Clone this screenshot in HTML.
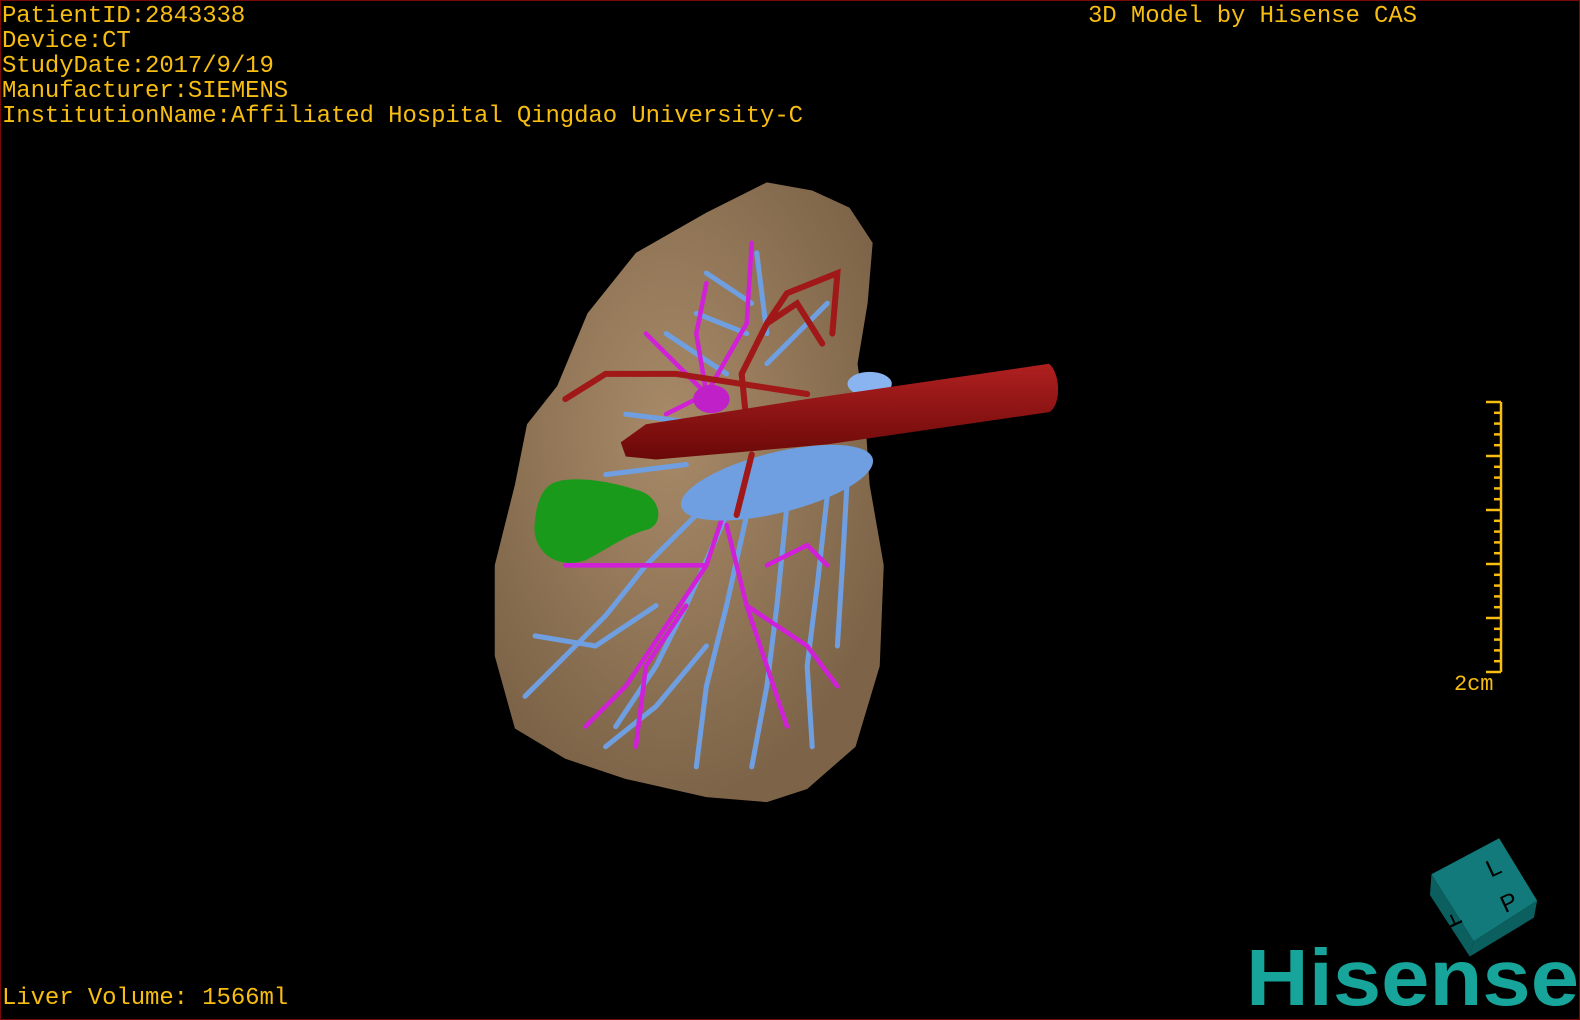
<!DOCTYPE html>
<html><head><meta charset="utf-8"><style>
html,body{margin:0;padding:0;background:#000;}
#f{position:relative;width:1580px;height:1020px;background:#000;overflow:hidden;box-sizing:border-box;border:1px solid #7a0a0a;}
.t{position:absolute;font-family:"Liberation Mono","Noto Sans CJK JP",monospace;font-size:24px;line-height:25px;color:#f7bd10;white-space:pre;letter-spacing:-0.1px;}
</style></head><body><div id="f">
<div class="t" style="left:1px;top:3px">PatientID:2843338
Device:CT
StudyDate:2017/9/19
Manufacturer:SIEMENS
InstitutionName:Affiliated Hospital Qingdao University-C</div>
<div class="t" style="left:1087px;top:3px">3D Model by Hisense CAS</div>
<div class="t" style="left:1px;top:985px">Liver Volume: 1566ml</div>
<div class="t" style="left:1453px;top:671px;font-size:22px">2cm</div>
<svg width="1580" height="1020" style="position:absolute;left:0;top:0">
<g stroke="#f7bd10" stroke-width="2.5">
<line x1="1500" y1="401" x2="1500" y2="671"/>
<g id="tk"></g>
</g>
<g transform="scale(1.0077)">
<defs><radialGradient id="lg" cx="45%" cy="40%" r="60%"><stop offset="0" stop-color="#a88a68"/><stop offset="1" stop-color="#7d6448"/></radialGradient>
<linearGradient id="rg" x1="0" y1="0" x2="0" y2="1"><stop offset="0" stop-color="#b02020"/><stop offset="1" stop-color="#6a0808"/></linearGradient></defs>
<path d="M760,180 L805,188 L842,205 L865,240 L860,300 L850,360 L858,420 L862,480 L876,560 L872,660 L848,740 L800,782 L760,795 L700,790 L620,772 L560,752 L510,722 L490,650 L490,560 L510,480 L522,420 L552,382 L582,310 L630,250 L700,210 Z" fill="url(#lg)"/>
<g fill="none" stroke="#6f9fe0" stroke-width="5" stroke-linecap="round">
<path d="M700,500 L640,560 L600,610 L560,650 L520,690"/>
<path d="M720,510 L680,600 L650,660 L610,720"/>
<path d="M740,510 L720,600 L700,680 L690,760"/>
<path d="M780,500 L770,600 L760,680 L745,760"/>
<path d="M820,490 L810,580 L800,660 L805,740"/>
<path d="M840,470 L835,560 L830,640"/>
<path d="M650,600 L590,640 L530,630"/>
<path d="M700,640 L650,700 L600,740"/>
<path d="M760,330 L750,250 M745,300 L700,270 M740,330 L690,310 M760,360 L820,300 M720,370 L660,330 M700,420 L620,410 M680,460 L600,470"/>
</g>
<g fill="none" stroke="#d020d8" stroke-width="4.5" stroke-linecap="round">
<path d="M720,500 L700,560 L660,620 L620,680 L580,720"/>
<path d="M720,520 L740,600 L760,660 L780,720"/>
<path d="M700,560 L620,560 L560,560"/>
<path d="M740,600 L800,640 L830,680"/>
<path d="M680,600 L640,660 L630,740"/>
<path d="M700,390 L690,330 L700,280 M700,390 L640,330 M700,390 L740,320 L745,240 M700,390 L660,410"/>
<path d="M760,560 L800,540 L820,560"/>
</g>
<ellipse cx="705" cy="395" rx="18" ry="14" fill="#c020c8"/>
<ellipse cx="770" cy="478" rx="98" ry="30" transform="rotate(-14 770 478)" fill="#6f9fe0"/>
<ellipse cx="862" cy="380" rx="22" ry="12" fill="#8ab4f0"/>
<path d="M545,480 C560,470 600,475 630,485 C655,490 660,520 640,525 C620,530 600,545 580,555 C550,565 525,545 530,515 C532,495 538,485 545,480 Z" fill="#1a9a1a"/>
<g fill="none" stroke="#a01818" stroke-width="6" stroke-linecap="round">
<path d="M740,420 L735,370 L760,320 L790,300 L815,340 M760,320 L780,290 L830,270 L825,330"/>
<path d="M735,380 L670,370 L600,370 L560,395 M735,380 L800,390"/>
<path d="M745,450 L730,510"/>
</g>
<path d="M615,438 L640,420 L800,395 L1040,360 C1052,370 1052,402 1040,408 L820,440 L650,455 L620,452 Z" fill="url(#rg)"/>
<g transform="translate(1470,885) rotate(-25)">
<path d="M-38,-38 L38,-42 L46,30 L-28,40 Z" fill="#127a7a"/>
<path d="M-38,-38 L-48,-20 L-38,52 L-28,40 Z" fill="#0c5f5f"/>
<path d="M-28,40 L-38,52 L36,44 L46,30 Z" fill="#0c5f5f"/>
<text x="-30" y="20" font-family="Liberation Sans" font-size="24" fill="#000" transform="rotate(-90 -30 20)">F</text>
<text x="14" y="-10" font-family="Liberation Sans" font-size="24" fill="#000">L</text>
<text x="12" y="28" font-family="Liberation Sans" font-size="24" fill="#000">P</text>
</g>
</g>
<text x="1245" y="1004" font-family="Liberation Sans" font-weight="bold" font-size="80" fill="#17a49a" textLength="333" lengthAdjust="spacingAndGlyphs">Hisense</text>
</svg>
<script>
var g=document.getElementById('tk'),s='';
for(var i=0;i<=25;i++){var y=401+i*10.8,l=(i%5==0)?15:7;s+='<line x1="'+(1500-l)+'" y1="'+y+'" x2="1500" y2="'+y+'"/>';}
g.innerHTML=s;
</script>
</div></body></html>
